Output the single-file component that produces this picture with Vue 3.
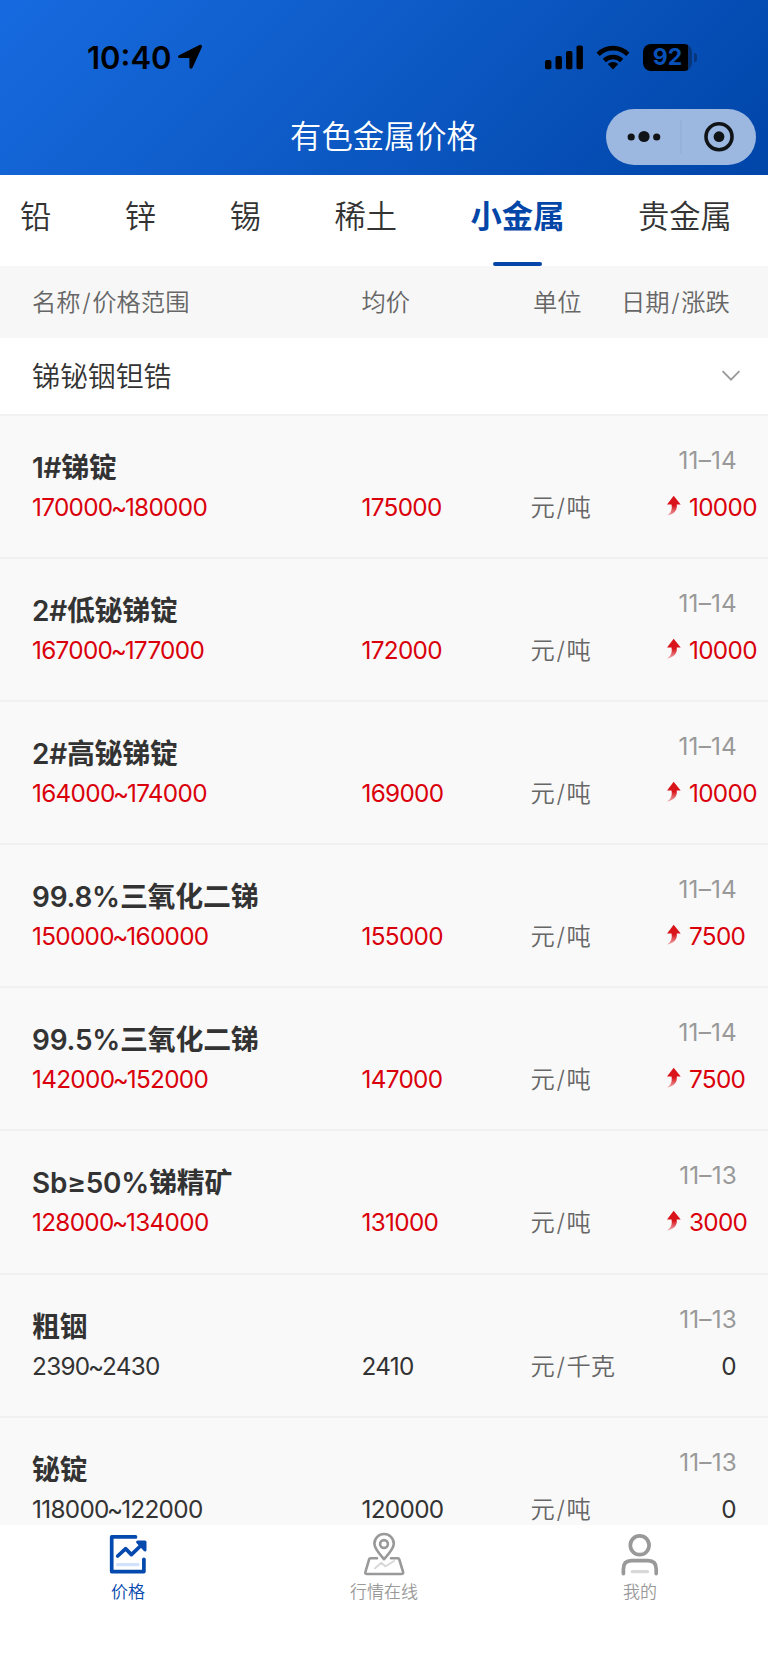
<template>
  <div class="page">
    <header class="header">
      <div class="status">
        <span class="time">10:40</span>
        <svg class="location" width="26" height="26" viewBox="0 0 26 26">
          <path d="M2 11.3 22.5 1.1c1.6-.8 3 .5 2.3 2.2L15.5 23.7c-.8 1.7-3.1 1.3-3.1-.6V14H3c-2.1 0-2.7-1.8-1-2.7Z" />
        </svg>
        <svg class="signal" width="38" height="25" viewBox="0 0 38 25">
          <rect x="0" y="15" width="6.4" height="9.3" rx="1.8" />
          <rect x="10.5" y="11" width="6.4" height="13.3" rx="1.8" />
          <rect x="21" y="6" width="6.4" height="18.3" rx="1.8" />
          <rect x="31.5" y="0.4" width="6.4" height="23.9" rx="1.8" />
        </svg>
        <svg class="wifi" width="34" height="25" viewBox="0 0 34 25">
          <path d="M17 24.4 11.8 19.1c3-2.7 7.4-2.7 10.4 0Z" />
          <path d="M8.3 15.5c5-4.6 12.4-4.6 17.4 0" />
          <path d="M2.2 9.3c8.4-8.2 21.2-8.2 29.6 0" />
        </svg>
        <div class="battery">92</div>
        <i class="battery-tip"></i>
      </div>
      <h1>有色金属价格</h1>
      <div class="capsule">
        <svg width="150" height="56" viewBox="0 0 150 56">
          <circle cx="25.2" cy="28" r="3.6" />
          <circle cx="38" cy="27.5" r="5.6" />
          <circle cx="50.7" cy="28" r="3.6" />
          <path class="divider" d="M75 11V45" />
          <circle class="ring" cx="113" cy="27.7" r="13" />
          <circle cx="113" cy="27.7" r="5.4" />
        </svg>
      </div>
    </header>

    <nav class="tabs">
      <span
        v-for="tab in tabs"
        :key="tab"
        :class="{ active: tab === current }"
        @click="current = tab"
      >{{ tab }}</span>
    </nav>

    <div class="columns">
      <span>名称<i class="slash">/</i>价格范围</span>
      <span>均价</span>
      <span>单位</span>
      <span>日期<i class="slash">/</i>涨跌</span>
    </div>

    <div class="category">
      <span>锑铋铟钽锆</span>
      <svg width="20" height="12" viewBox="0 0 20 12">
        <path d="M1.6 1.2 10 9.7l8.4-8.5" />
      </svg>
    </div>

    <ul class="list">
      <li v-for="item in items" :key="item.name" :class="{ up: item.change > 0 }">
        <div>
          <p class="name">{{ item.name }}</p>
          <p class="price">{{ item.low }}<i class="tilde">~</i>{{ item.high }}</p>
        </div>
        <p class="price">{{ item.avg }}</p>
        <p class="unit">元<i class="slash">/</i>{{ item.per }}</p>
        <div class="last">
          <p class="date">{{ item.date }}</p>
          <p class="change">
            <svg v-if="item.change > 0" width="16" height="22" viewBox="0 0 16 22">
              <defs>
                <linearGradient id="rise" x1="0" y1="0" x2="0" y2="1">
                  <stop offset="0.5" stop-color="#d9151b" />
                  <stop offset="1" stop-color="#d9151b" stop-opacity="0.35" />
                </linearGradient>
              </defs>
              <path fill="url(#rise)" d="M7.7.8 14.7 9.6H10.7C11.6 15 8 19.8 1 20.4C5 18.3 6.4 14.6 5.5 9.6H1Z" />
            </svg>
            <span>{{ item.change }}</span>
          </p>
        </div>
      </li>
    </ul>

    <footer class="tabbar">
      <a class="active">
        <svg width="48" height="48" viewBox="0 0 48 48">
          <path class="thick" d="M31.5 6.9H7.7V41.6H39.9V29.3" />
          <path class="thick" d="M13.7 26 21.7 18.7 27.4 24.6 38.5 14" />
          <path class="fill" d="M33.6 12H41V20Z" />
          <path class="pale" d="M13.5 34.7H34" />
        </svg>
        价格
      </a>
      <a>
        <svg width="48" height="48" viewBox="0 0 48 48">
          <path class="thin" d="M24 29.2C19 23.5 14.4 18.5 14.4 13.7a9.7 9.7 0 0 1 19.4 0C33.8 18.5 29 23.5 24 29.2Z" />
          <circle class="thin" cx="24" cy="14" r="3.9" />
          <path class="thin" d="M17 28.2H10.5Q9.5 28.2 9.2 29.2L5.4 42Q4.9 44 7 44H41.5Q43.6 44 43.1 42L39.2 29.2Q38.9 28.2 37.9 28.2H31" />
          <path class="pale line" d="M15 38.3 21.3 32.7 25.3 36.3 34 31" />
        </svg>
        行情在线
      </a>
      <a>
        <svg width="48" height="48" viewBox="0 0 48 48">
          <circle class="thick" cx="23.7" cy="15.3" r="9.4" />
          <path class="thick" d="M7.4 43.6V39Q7.4 30.7 15.6 30.7H32Q40.2 30.7 40.2 39V43.6" />
          <path class="pale" d="M16.3 41.7H31.5" />
        </svg>
        我的
      </a>
    </footer>
  </div>
</template>

<script setup>
import { ref } from 'vue'

const tabs = ['铅', '锌', '锡', '稀土', '小金属', '贵金属']
const current = ref('小金属')

const items = ref([
  { name: '1#锑锭', low: 170000, high: 180000, avg: 175000, per: '吨', date: '11–14', change: 10000 },
  { name: '2#低铋锑锭', low: 167000, high: 177000, avg: 172000, per: '吨', date: '11–14', change: 10000 },
  { name: '2#高铋锑锭', low: 164000, high: 174000, avg: 169000, per: '吨', date: '11–14', change: 10000 },
  { name: '99.8%三氧化二锑', low: 150000, high: 160000, avg: 155000, per: '吨', date: '11–14', change: 7500 },
  { name: '99.5%三氧化二锑', low: 142000, high: 152000, avg: 147000, per: '吨', date: '11–14', change: 7500 },
  { name: 'Sb≥50%锑精矿', low: 128000, high: 134000, avg: 131000, per: '吨', date: '11–13', change: 3000 },
  { name: '粗铟', low: 2390, high: 2430, avg: 2410, per: '千克', date: '11–13', change: 0 },
  { name: '铋锭', low: 118000, high: 122000, avg: 120000, per: '吨', date: '11–13', change: 0 }
])
</script>

<style>
body {
  background: #fff;
}
</style>

<style scoped>
.page {
  display: flex;
  flex-direction: column;
  width: 768px;
  height: 1669px;
  overflow: hidden;
  background: #fff;
  color: #333;
  font-family: Inter, "Noto Sans CJK SC", sans-serif;
  font-weight: 350;
}

h1, p, ul {
  margin: 0;
  padding: 0;
  font-weight: inherit;
}

i {
  font-style: normal;
}

.slash {
  margin: 0 1.6px;
}

.tilde {
  margin: 0 -1.4px 0 -1.6px;
}

.header {
  position: relative;
  flex: none;
  height: 175px;
  background: linear-gradient(135deg, #176adf 0%, #0f5dca 40%, #0045a8 100%);
}

.status {
  display: flex;
  align-items: center;
  box-sizing: border-box;
  height: 98px;
  padding: 16px 0 0 87px;
  color: #000;
}

.time {
  width: 90px;
  font-size: 31px;
  font-weight: 600;
}

.signal {
  margin-left: 342px;
}

.wifi {
  margin-left: 13px;
}

.wifi path + path {
  fill: none;
  stroke: #000;
  stroke-width: 4.6;
}

.battery {
  width: 49px;
  height: 27px;
  margin-left: 13px;
  border-radius: 8px;
  background: linear-gradient(90deg, #000 45px, #06357c 45px);
  color: #0851b8;
  font-size: 23px;
  font-weight: 700;
  line-height: 27px;
  text-align: center;
}

.battery-tip {
  width: 3px;
  height: 9px;
  margin-left: 2px;
  border-radius: 0 4px 4px 0;
  background: #06357c;
}

.header h1 {
  padding-top: 16px;
  color: #fff;
  font-size: 31.3px;
  line-height: 46px;
  text-align: center;
}

.capsule {
  position: absolute;
  top: 109px;
  left: 605.5px;
  width: 150px;
  height: 56px;
  border-radius: 28px;
  background: #9cb7e0;
}

.capsule svg {
  display: block;
  fill: #111417;
}

.capsule .divider {
  stroke: #8eabd8;
}

.capsule .ring {
  fill: none;
  stroke: #111417;
  stroke-width: 3.6;
}

.tabs {
  display: flex;
  flex: none;
  gap: 73.5px;
  height: 91px;
  padding-left: 20px;
  font-size: 31.3px;
  line-height: 85px;
  white-space: nowrap;
}

.tabs .active {
  position: relative;
  color: #0346a8;
  font-weight: bold;
}

.tabs .active::after {
  content: "";
  position: absolute;
  bottom: 0;
  left: 50%;
  width: 49px;
  height: 4px;
  margin-left: -25px;
  border-radius: 2px;
  background: #0346a8;
}

.columns {
  display: grid;
  grid-template-columns: 329.5px 171.5px 88px auto;
  flex: none;
  height: 71.5px;
  padding-left: 32px;
  background: #f7f7f7;
  color: #666;
  font-size: 24.3px;
  line-height: 72px;
}

.category {
  display: flex;
  align-items: center;
  justify-content: space-between;
  box-sizing: border-box;
  flex: none;
  height: 76.5px;
  padding: 0 27px 2px 32px;
  font-size: 27.9px;
}

.category svg {
  margin-top: 3px;
}

.category path {
  fill: none;
  stroke: #999;
  stroke-width: 1.8;
}

.list {
  flex: 1;
  overflow: hidden;
  background: #f9f9f9;
  list-style: none;
}

.list li {
  display: grid;
  grid-template-columns: 329.5px 169px 135.5px 70px;
  align-items: start;
  box-sizing: border-box;
  height: 143.1px;
  padding: 31px 0 0 32px;
  border-top: 2px solid #f1f1f1;
  font-size: 24.3px;
  line-height: 40px;
  white-space: nowrap;
}

.name {
  position: relative;
  top: 1px;
  font-size: 27.9px;
  font-weight: 600;
  letter-spacing: -0.2px;
}

.price, .change {
  font-weight: 400;
  letter-spacing: -0.68px;
}

li > .price, .unit {
  padding-top: 40px;
}

.unit {
  color: #666;
}

.date {
  margin: -7px -1px 0 0;
  color: #999;
  font-weight: 400;
  letter-spacing: 0.2px;
  text-align: right;
}

.change {
  display: flex;
  align-items: center;
  justify-content: flex-end;
  margin-top: 7px;
}

.up .change {
  justify-content: flex-start;
}

.change svg {
  flex: none;
  margin: -2px 7px 0 0;
}

.up .price, .up .change {
  color: #d9000b;
}

.tabbar {
  display: grid;
  grid-template-columns: repeat(3, 1fr);
  flex: none;
  height: 144px;
  background: #fff;
}

.tabbar a {
  display: flex;
  flex-direction: column;
  align-items: center;
  padding-top: 5px;
  color: #999;
  font-size: 17px;
  line-height: 28px;
}

.tabbar .active {
  color: #0449ad;
}

.tabbar path, .tabbar circle {
  fill: none;
  stroke: currentColor;
  stroke-linecap: round;
  stroke-linejoin: round;
}

.tabbar .thick {
  stroke-width: 3.7;
}

.tabbar .thin {
  stroke-width: 2.6;
}

.tabbar .fill {
  fill: currentColor;
  stroke-width: 3;
}

.tabbar .pale {
  stroke: #d8d8d8;
  stroke-width: 3.2;
}

.tabbar .line {
  stroke-width: 2;
}

.tabbar .active .pale {
  stroke: #d2e2fd;
}
</style>
